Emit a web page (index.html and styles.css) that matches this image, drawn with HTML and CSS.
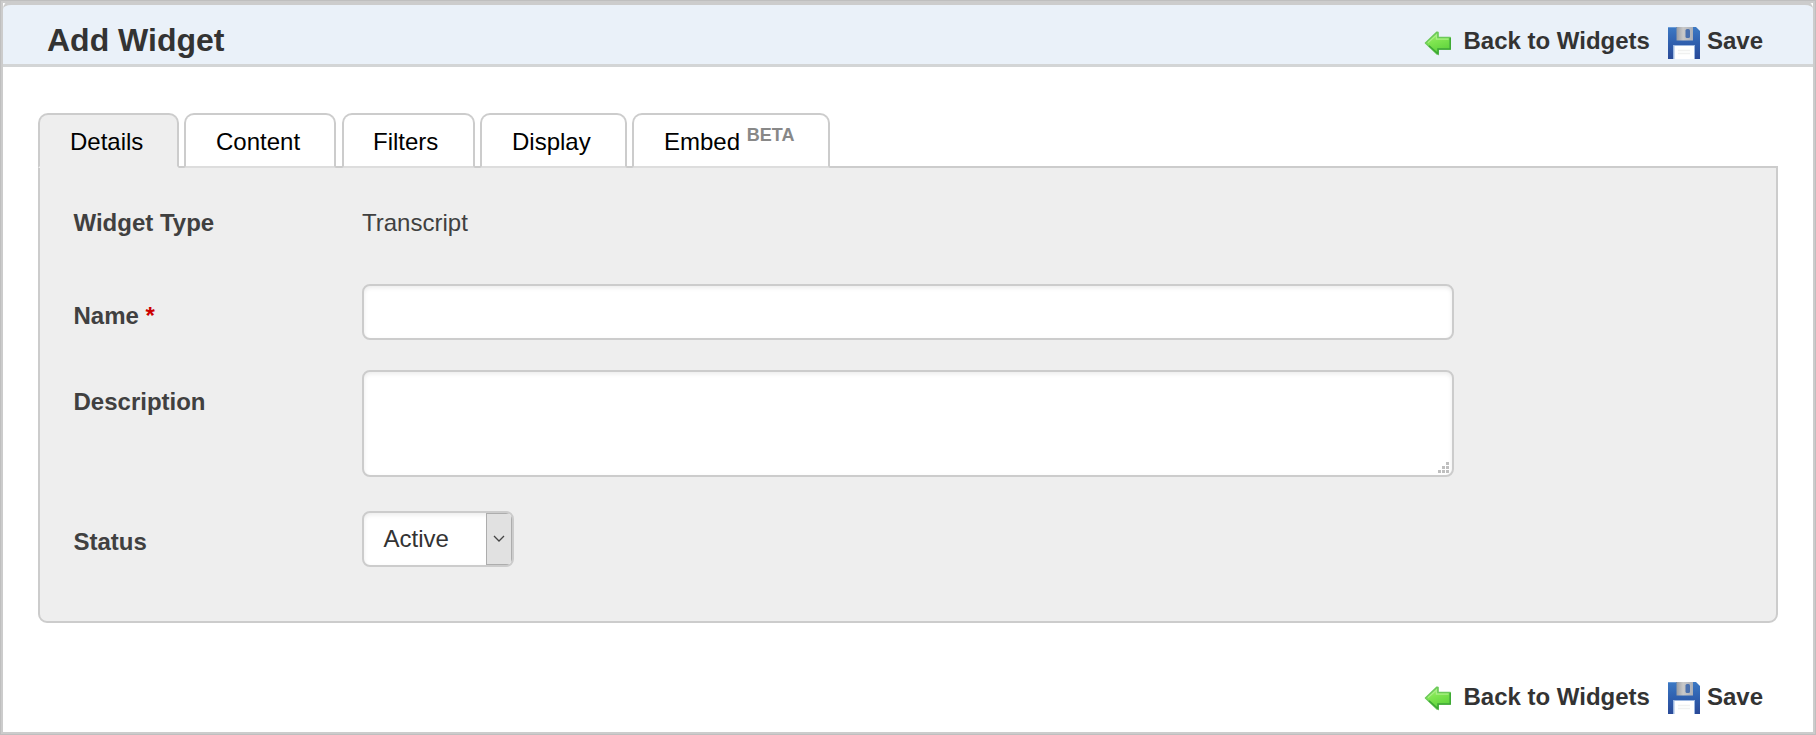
FILE: index.html
```
<!DOCTYPE html>
<html>
<head>
   <meta charset="utf-8" />
   <title>Add Widget</title>
   <link rel="stylesheet" href="styles.css">
</head>
<body>
   <!-- shared icons -->
   <svg class="defs" width="0" height="0">
      <defs>
         <linearGradient id="green" x1="0" y1="0" x2="0.4" y2="1">
            <stop offset="0" stop-color="#a4f078" />
            <stop offset="0.5" stop-color="#7fe550" />
            <stop offset="1" stop-color="#5fd43c" />
         </linearGradient>
         <linearGradient id="blue" x1="0" y1="0" x2="0" y2="1">
            <stop offset="0" stop-color="#3c79c4" />
            <stop offset="0.5" stop-color="#2f5fae" />
            <stop offset="1" stop-color="#2a4a98" />
         </linearGradient>
         <linearGradient id="metal" x1="0" y1="0" x2="1" y2="0">
            <stop offset="0" stop-color="#9a9da3" />
            <stop offset="0.4" stop-color="#c9c9c9" />
            <stop offset="1" stop-color="#aaaeb6" />
         </linearGradient>
         <symbol id="back" viewBox="0 0 28 26">
            <path d="M1.5 13 L13 2.2 L14 2.6 V7.5 H26.2 V19 H14 V23.6 L13 24 Z" fill="url(#green)" stroke="#6cc95a" stroke-width="1.6" stroke-linejoin="round" />
            <path d="M26.2 8 V19 H14 V23.8 L5 15.8" fill="none" stroke="#3da834" stroke-width="1.5" />
            <path d="M4 12.6 L12.4 5 V9.2 H24.6" fill="none" stroke="#a9ee86" stroke-width="1.2" />
         </symbol>
         <symbol id="disk" viewBox="0 0 32 32">
            <path d="M0 0 H28 L32 4 V32 H0 Z" fill="url(#blue)" />
            <path d="M0 0 H8 V1 H0 Z" fill="#6a9bd6" />
            <rect x="8.5" y="0" width="16.5" height="13.5" fill="url(#metal)" />
            <rect x="17.5" y="2" width="4.5" height="9" rx="1.5" fill="#4a70ae" />
            <rect x="5" y="18" width="22" height="14" fill="#9db8e0" />
            <rect x="6.5" y="19" width="19.5" height="13" fill="#fff" />
            <path d="M10 23.5 H22 M10 26.5 H22" stroke="#f0f1f0" stroke-width="1.5" />
         </symbol>
      </defs>
   </svg>

   <div class="page">
      <div class="header">
         <h1>Add Widget</h1>
         <div class="actions">
            <a class="back"><svg width="28" height="26"><use href="#back" /></svg>Back to Widgets</a>
            <a class="save"><svg width="32" height="32"><use href="#disk" /></svg>Save</a>
         </div>
      </div>

      <div class="tabs">
         <a class="tab active">Details</a>
         <a class="tab content">Content</a>
         <a class="tab filters">Filters</a>
         <a class="tab display">Display</a>
         <a class="tab embed">Embed <span class="beta">BETA</span></a>
      </div>

      <form class="panel">
         <div class="row type">
            <label>Widget Type</label>
            <span>Transcript</span>
         </div>
         <div class="row name">
            <label for="name">Name <span class="required">*</span></label>
            <input id="name" class="field" type="text" />
         </div>
         <div class="row description">
            <label for="description">Description</label>
            <div class="area">
               <textarea id="description" class="field"></textarea>
               <svg class="grip" width="11" height="11" fill="#bfbfbf" shape-rendering="crispEdges">
                  <path d="M8 0h3v3h-3z M4 4h3v3h-3z M8 4h3v3h-3z M0 8h3v3h-3z M4 8h3v3h-3z M8 8h3v3h-3z" />
               </svg>
            </div>
         </div>
         <div class="row status">
            <label>Status</label>
            <div class="field select">
               <span>Active</span>
               <div class="arrow">
                  <svg width="12" height="8"><path d="M1 1 L6 6 L11 1" fill="none" stroke="#444" stroke-width="1.3" /></svg>
               </div>
            </div>
         </div>
      </form>

      <div class="footer">
         <div class="actions">
            <a class="back"><svg width="28" height="26"><use href="#back" /></svg>Back to Widgets</a>
            <a class="save"><svg width="32" height="32"><use href="#disk" /></svg>Save</a>
         </div>
      </div>
   </div>
</body>
</html>
```
FILE: styles.css
```
* { box-sizing: border-box; }

body { margin: 0; background: #fff; color: #404040; font: 24px/28px Arial, "Liberation Sans", sans-serif; }

.defs { display: block; }

.page { height: 735px; border: 1px solid #bfbfbf; box-shadow: inset 0 0 0 2px #ccc; padding: 0 2px 2px; overflow: hidden; }

.header { display: flex; justify-content: space-between; height: 66px; background: #eaf1f9; border-top: 4px solid #ccc; border-bottom: 3px solid #d3d5d6; border-radius: 8px 8px 0 0; padding: 0 50px 0 44px; }
h1 { margin: 17px 0 0; font-size: 32px; line-height: 36px; color: #333; }

.actions { display: flex; font-weight: bold; color: #333; }
.actions a { display: flex; }
.header .actions { margin-top: 22px; }
.back { margin-right: 18px; }
.back svg { margin: 3px 11px 0 0; }
.save svg { margin-right: 7px; }

.tabs { display: flex; height: 55px; margin: 46px 35px 0; position: relative; z-index: 1; }
.tab { height: 55px; margin-right: 5px; padding: 13px 0 0 30px; color: #000; background: #fff; border: 2px solid #ccc; border-bottom-color: #ddd; border-radius: 10px 10px 0 0; }
.tab.active { width: 141px; background: #eee; border-bottom-color: #eee; }
.tab.content { width: 152px; margin-right: 6px; }
.tab.filters { width: 133px; padding-left: 29px; }
.tab.display { width: 147px; }
.tab.embed { width: 198px; margin-right: 0; }
.beta { font-size: 18px; font-weight: bold; line-height: 0; color: #888; vertical-align: 9px; }

.panel { height: 457px; margin: -2px 35px 0; padding: 41px 0 0 33.5px; background: #eee; border: 2px solid #ccc; border-radius: 0 0 9px 9px; }
.row { display: flex; }
.row label { width: 288.5px; font-weight: bold; }
.type { height: 75px; }
.name { height: 86px; }
.name label { padding-top: 18px; }
.description { height: 141px; }
.description label { padding-top: 18px; }
.status label { padding-top: 17px; }
.required { color: #c00; }

.field { display: block; width: 1092px; height: 56px; margin: 0; background: #fff; border: 2px solid #ccc; border-radius: 8px; box-shadow: inset 0 2px 4px rgba(0, 0, 0, 0.08); outline: none; }
textarea.field { height: 107px; resize: none; }
.area { position: relative; height: 107px; }
.grip { position: absolute; right: 5px; bottom: 4px; }

.select { display: flex; justify-content: space-between; width: 152px; color: #333; overflow: hidden; }
.select span { padding: 12px 0 0 19.5px; }
.arrow { display: flex; align-items: center; justify-content: center; width: 26px; background: #e1e1e1; border: 1px solid #adadad; }

.footer { display: flex; justify-content: flex-end; margin-top: 59px; padding-right: 50px; }
.footer a { padding-top: 1px; }
.footer .back svg { margin-top: 2px; }
.footer .save svg { margin-top: -1px; }
```
